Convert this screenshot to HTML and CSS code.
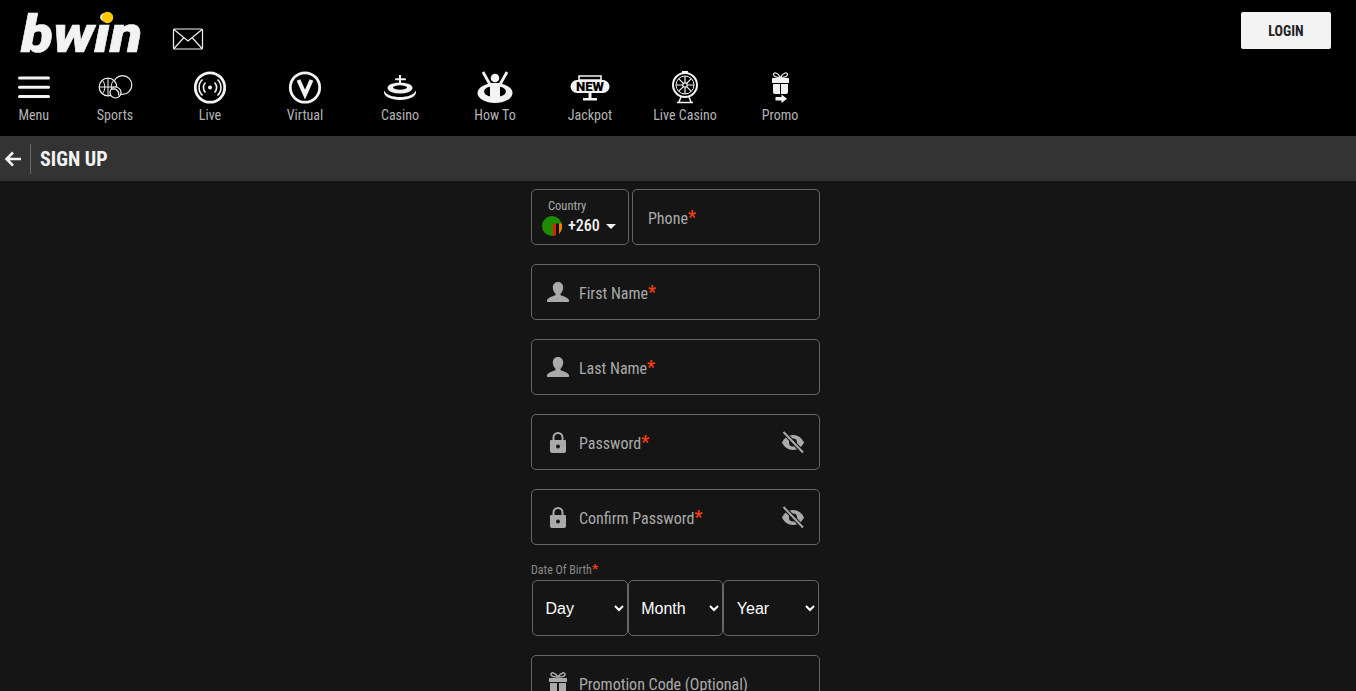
FILE: index.html
```html
<!DOCTYPE html>
<html lang="en">
<head>
<meta charset="utf-8">
<title>bwin - Sign Up</title>
<link rel="stylesheet" href="styles.css">
</head>
<body>
<header class="header">
  <div class="top">
    <div class="brand">
      <svg class="logo" width="124" height="42" viewBox="0 0 124 42"><text class="logo-text" x="1" y="40" textLength="121" lengthAdjust="spacingAndGlyphs">bwin</text><circle cx="87.500" cy="5.500" r="5.700" fill="#ffc800"/></svg>
      <svg class="mail" width="32" height="24" viewBox="0 0 32 24" fill="none" stroke="#f3f3f3" stroke-width="1.2"><rect x="1.500" y="2" width="29" height="20" rx="1"/><path d="M2 2.500 16 14 30 2.500M2 21.500 12 10.500M30 21.500 20 10.500"/></svg>
    </div>
    <button class="login">LOGIN</button>
  </div>
  <nav class="nav">
    <a class="nav-item nav-menu">
      <svg width="34" height="34" viewBox="0 0 34 34" fill="#f3f3f3"><rect x="1" y="5.500" width="32" height="3" rx="1.500"/><rect x="1" y="14.700" width="32" height="3" rx="1.500"/><rect x="1" y="24" width="32" height="3" rx="1.500"/></svg>
      <span>Menu</span>
    </a>
    <a class="nav-item">
      <svg width="36" height="34" viewBox="0 0 36 34" fill="none" stroke="#f3f3f3" stroke-width="1.200"><circle cx="25.500" cy="14" r="9.300" fill="#000"/><circle cx="11" cy="16" r="8.800" fill="#000"/><path stroke-width="1" d="M2.500 16h17M11 7.500v17M5.500 9.500c3 3 3 10 0 13M16.500 9.500c-3 3-3 10 0 13"/><circle cx="18.500" cy="21.500" r="5.500" fill="#000"/><path d="M14.500 18.500a5 5 0 0 1 7 6"/></svg>
      <span>Sports</span>
    </a>
    <a class="nav-item">
      <svg width="34" height="34" viewBox="0 0 34 34" fill="none" stroke="#f3f3f3"><circle cx="17" cy="16.500" r="14.700" stroke-width="2.800"/><circle cx="17" cy="16.500" r="2" fill="#f3f3f3" stroke="none"/><path stroke-width="1.600" d="M12.500 11.500a7 7 0 0 0 0 10M21.500 11.500a7 7 0 0 1 0 10M9.500 8.500a11 11 0 0 0 0 16M24.500 8.500a11 11 0 0 1 0 16"/></svg>
      <span>Live</span>
    </a>
    <a class="nav-item">
      <svg width="34" height="34" viewBox="0 0 34 34" fill="none" stroke="#f3f3f3"><circle cx="17" cy="16.500" r="14.700" stroke-width="2.800"/><path stroke-width="4" d="M10.500 9 17 23.500 23.500 9"/></svg>
      <span>Virtual</span>
    </a>
    <a class="nav-item">
      <svg width="36" height="34" viewBox="0 0 36 34" fill="#f3f3f3"><rect x="17" y="4" width="2" height="8"/><rect x="13" y="7.200" width="11" height="2" rx="1"/><ellipse cx="18" cy="17" rx="12.500" ry="5.500"/><ellipse cx="18" cy="16.500" rx="7" ry="2.200" fill="#000"/><path d="M2 19.500c2 4.500 9 6.500 16 6.500s14-2 16-6.500c.5 3-1 5-2.500 6-3 2.300-8 3.500-13.500 3.500s-10.500-1.200-13.500-3.500c-1.500-1-3-3-2.500-6z"/></svg>
      <span>Casino</span>
    </a>
    <a class="nav-item">
      <svg width="36" height="34" viewBox="0 0 36 34"><ellipse cx="18" cy="22" rx="17.500" ry="10" fill="#f3f3f3"/><ellipse cx="18" cy="20.500" rx="11" ry="5.500" fill="#000"/><circle cx="18" cy="7" r="4.300" fill="#f3f3f3"/><path d="M6 1l7 12.500h10L30 1" fill="none" stroke="#f3f3f3" stroke-width="2.800"/><path d="M13 13h10v14H13z" fill="#f3f3f3"/></svg>
      <span>How To</span>
    </a>
    <a class="nav-item">
      <svg width="40" height="34" viewBox="0 0 40 34"><path d="M9 5h22v4H9z" fill="none" stroke="#f3f3f3" stroke-width="1.600"/><rect x="0.500" y="9" width="39" height="13" rx="6.500" fill="#f3f3f3"/><text class="new" x="6" y="20" textLength="28" lengthAdjust="spacingAndGlyphs">NEW</text><path d="M18.500 22h3v5h-3zM13 27h14v2.500H13z" fill="#f3f3f3"/></svg>
      <span>Jackpot</span>
    </a>
    <a class="nav-item">
      <svg width="34" height="34" viewBox="0 0 34 34" fill="none" stroke="#f3f3f3"><circle cx="17" cy="14" r="12" stroke-width="2"/><circle cx="17" cy="14" r="9" stroke-width="1"/><circle cx="17" cy="14" r="2.200" stroke-width="1.200"/><path stroke-width="1.200" d="M17 5v6.800M17 16.200V23M8 14h6.800M19.200 14H26M10.600 7.600l4.800 4.800M18.600 15.600l4.800 4.800M23.400 7.600l-4.800 4.800M15.400 15.600l-4.800 4.800"/><path stroke-width="2" d="M14 1h6"/><path stroke-width="1.500" d="M13 26l-2 5M21 26l2 5M9 31.500h16"/></svg>
      <span>Live Casino</span>
    </a>
    <a class="nav-item">
      <svg width="24" height="34" viewBox="0 0 24 34" fill="#f3f3f3"><path d="M12.500 6.500C9.500 1 5.500 1 5.500 3.500s4 3 7 3c3 0 7-.5 7-3s-4-2.500-7 3z" fill="none" stroke="#f3f3f3" stroke-width="1.200"/><rect x="4" y="7" width="17" height="5" rx=".5"/><path d="M5 13h7v10H7q-2 0-2-2zM13 13h7v8q0 2-2 2h-5z"/><path d="M7.500 26h6v-2.500l5.500 4.300-5.500 4.200V29.500h-6z"/></svg>
      <span>Promo</span>
    </a>
  </nav>
</header>

<div class="subbar">
  <svg class="back" width="18" height="16" viewBox="0 0 18 16" fill="none" stroke="#f3f3f3" stroke-width="2.500"><path d="M17 8H3M9 1.500 2.500 8 9 14.500"/></svg>
  <h1 class="subtitle">SIGN UP</h1>
</div>

<main class="form">
  <div class="phone-row">
    <div class="box country">
      <span class="country-label">Country</span>
      <span class="country-value">
        <svg class="flag" width="20" height="20" viewBox="0 0 20 20"><circle cx="10" cy="10" r="10" fill="#1e8c00"/><path d="M11 7.500h3v12h-3z" fill="#de2010"/><path d="M14 7.500h3v10.500l-3 1.500z" fill="#111"/><path d="M17 7.500h3V10a10 10 0 0 1-3 8z" fill="#ef7d00"/></svg>
        +260<i class="caret"></i>
      </span>
    </div>
    <div class="box phone"><span class="ph">Phone<b>*</b></span></div>
  </div>

  <div class="box field">
    <svg class="ficon" width="24" height="24" viewBox="0 0 24 24" fill="#aaa"><path d="M12 2c3.500 0 5.200 2.600 5.200 5.500 0 2.500-1.200 5-2.700 6.200v1.300c1 1 7.500 2 8.500 5.200.2.800 0 1.800-1 1.800H2c-1 0-1.200-1-1-1.800 1-3.200 7.500-4.200 8.500-5.200v-1.300C8 12.500 6.800 10 6.800 7.500 6.800 4.600 8.500 2 12 2z"/></svg>
    <span class="ph">First Name<b>*</b></span>
  </div>
  <div class="box field">
    <svg class="ficon" width="24" height="24" viewBox="0 0 24 24" fill="#aaa"><path d="M12 2c3.500 0 5.200 2.600 5.200 5.500 0 2.500-1.200 5-2.700 6.200v1.300c1 1 7.500 2 8.500 5.200.2.800 0 1.800-1 1.800H2c-1 0-1.200-1-1-1.800 1-3.200 7.500-4.200 8.500-5.200v-1.300C8 12.500 6.800 10 6.800 7.500 6.800 4.600 8.500 2 12 2z"/></svg>
    <span class="ph">Last Name<b>*</b></span>
  </div>
  <div class="box field">
    <svg class="ficon" width="24" height="24" viewBox="0 0 24 24"><path d="M7.500 11V7.500a4.500 4.500 0 0 1 9 0V11" fill="none" stroke="#aaa" stroke-width="2"/><path d="M5 10h14q1 0 1 1v10q0 2-2 2H6q-2 0-2-2V11q0-1 1-1z" fill="#aaa"/><circle cx="12" cy="16.500" r="2" fill="#151515"/></svg>
    <span class="ph">Password<b>*</b></span>
    <svg class="eye" width="24" height="24" viewBox="0 0 24 24" fill="#aaa"><path d="M12 5C7 5 3 8 1 12.500 3 17 7 20 12 20s9-3 11-7.500C21 8 17 5 12 5z"/><circle cx="12" cy="12.500" r="4" fill="#151515"/><path d="M3 2.500 21.500 22" stroke="#151515" stroke-width="4"/><path d="M2.500 2 22 22.500" stroke="#aaa" stroke-width="2"/></svg>
  </div>
  <div class="box field">
    <svg class="ficon" width="24" height="24" viewBox="0 0 24 24"><path d="M7.500 11V7.500a4.500 4.500 0 0 1 9 0V11" fill="none" stroke="#aaa" stroke-width="2"/><path d="M5 10h14q1 0 1 1v10q0 2-2 2H6q-2 0-2-2V11q0-1 1-1z" fill="#aaa"/><circle cx="12" cy="16.500" r="2" fill="#151515"/></svg>
    <span class="ph">Confirm Password<b>*</b></span>
    <svg class="eye" width="24" height="24" viewBox="0 0 24 24" fill="#aaa"><path d="M12 5C7 5 3 8 1 12.500 3 17 7 20 12 20s9-3 11-7.500C21 8 17 5 12 5z"/><circle cx="12" cy="12.500" r="4" fill="#151515"/><path d="M3 2.500 21.500 22" stroke="#151515" stroke-width="4"/><path d="M2.500 2 22 22.500" stroke="#aaa" stroke-width="2"/></svg>
  </div>

  <div class="dob">
    <label class="dob-label">Date Of Birth<b>*</b></label>
    <div class="dob-row">
      <select class="sel"><option>Day</option></select>
      <select class="sel"><option>Month</option></select>
      <select class="sel"><option>Year</option></select>
    </div>
  </div>

  <div class="box field">
    <svg class="ficon" width="24" height="24" viewBox="0 0 24 24" fill="#aaa"><path d="M12 6C9 1 5 1 5 3.500S9 6 12 6c3 0 7 0 7-2.500S15 1 12 6z" fill="none" stroke="#aaa" stroke-width="1.500"/><rect x="3" y="7" width="18" height="4"/><path d="M4 12h7v11H4zM13 12h7v11h-7z"/></svg>
    <span class="ph">Promotion Code (Optional)</span>
  </div>
</main>
</body>
</html>
```
FILE: styles.css
```css
* { box-sizing: border-box; }
html, body { margin: 0; height: 100%; overflow: hidden; }
body {
  background: #151515;
  font-family: "Roboto Condensed", Roboto, "Liberation Sans", sans-serif;
  font-stretch: 75%;
  color: #aaa;
}
.header { background: #000; height: 136px; padding-top: 12px; }
.top { display: flex; justify-content: space-between; align-items: flex-start; height: 59px; padding: 0 25px 0 20px; }
.brand { display: flex; align-items: flex-end; gap: 28px; }
.logo { display: block; overflow: visible; }
.logo-text { font: italic 900 52px Roboto, "Liberation Sans", sans-serif; fill: #f3f3f3; stroke: #f3f3f3; stroke-width: .6px; }
.mail { display: block; margin-bottom: 3px; }
.login {
  width: 90px; height: 37px; border: 0; border-radius: 2px;
  background: #f3f3f3; color: #222;
  font: 700 14px "Roboto Condensed", Roboto, sans-serif; font-stretch: 75%;
}
.nav { display: flex; }
.nav-item { width: 95px; display: flex; flex-direction: column; align-items: center; font-size: 14px; line-height: 16px; color: #b4b4b4; }
.nav-item svg { display: block; margin-bottom: 2px; }
.nav-menu { width: 67.5px; }
.new { font: 900 12px Roboto, sans-serif; fill: #000; }
.subbar { height: 45px; background: #333; display: flex; align-items: center; padding-left: 4px; }
.back { margin-right: 8px; }
.subtitle {
  margin: 0; padding-left: 9px; height: 30px; line-height: 30px;
  border-left: 1px solid #666; color: #f3f3f3;
  font-size: 20px; font-weight: 700;
}
.form { width: 289px; margin: 8px 0 0 calc(50% - 147px); }
.box { border: 1px solid #666; border-radius: 5px; height: 56px; background: #151515; }
.phone-row { display: flex; gap: 3px; margin-bottom: 19px; }
.country { width: 98px; padding: 8px 0 0 10px; display: flex; flex-direction: column; }
.country-label { font-size: 12.5px; line-height: 15px; padding-left: 6px; color: #aaa; }
.country-value { display: flex; align-items: center; gap: 6px; color: #f3f3f3; font-size: 16px; font-weight: 500; line-height: 24px; margin-top: 1px; }
.caret { width: 0; height: 0; margin-left: 0; border: 5px solid transparent; border-top-color: #f3f3f3; border-bottom: 0; }
.phone { flex: 1; display: flex; align-items: center; padding-left: 15px; }
.ph { font-size: 16px; color: #aaa; line-height: 20px; margin-top: 4px; }
.ph b, .dob-label b { color: #ff3c14; font-weight: 700; font-size: 1.1em; line-height: 0; vertical-align: 1px; }
.field { display: flex; align-items: center; padding-left: 14px; margin-bottom: 19px; }
.ficon { margin-right: 9px; }
.eye { margin-left: auto; margin-right: 14px; }
.dob { margin-bottom: 19px; }
.dob-label { display: block; font-size: 12px; line-height: 12px; color: #888; margin-bottom: 4px; }
.dob-row { display: flex; padding: 0 1px; }
.sel {
  flex: 1; min-width: 0; height: 56px; padding-left: 8.5px;
  background: #151515; color: #fff; color-scheme: dark;
  border: 1px solid #666; border-radius: 5px;
  font: 16px "Liberation Sans", sans-serif;
}
```
